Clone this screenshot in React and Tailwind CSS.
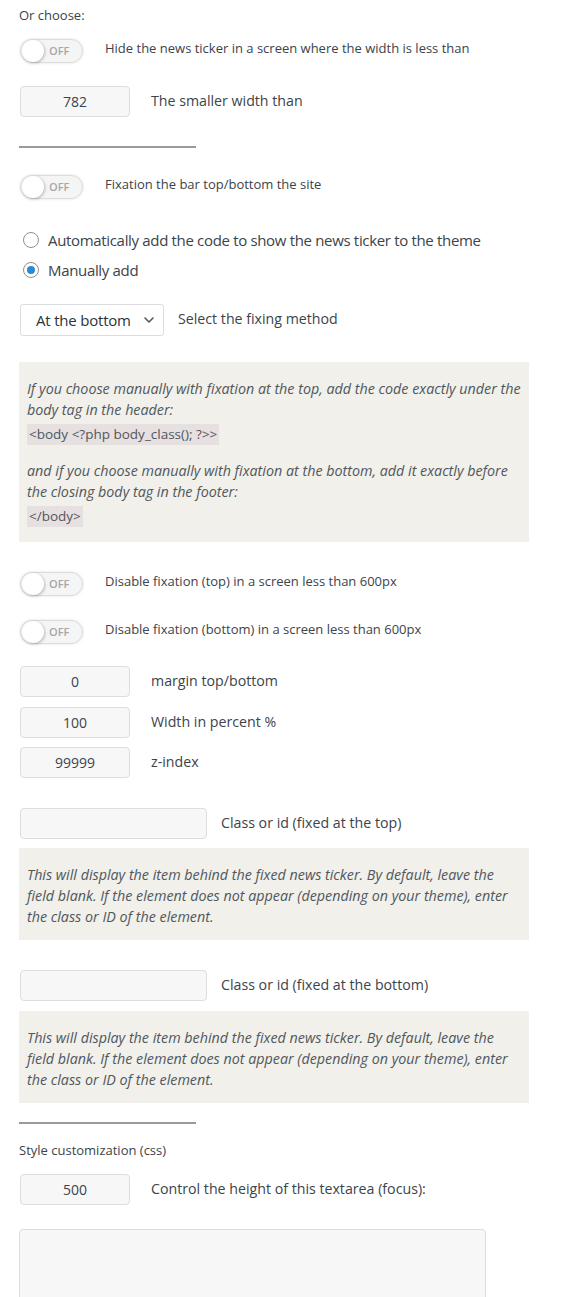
import React from "react";

const Toggle = () => (
  <div className="relative w-[63px] h-[24px] shrink-0 rounded-full border border-[#dcdcdc] bg-[#f5f5f5] shadow-[0_0_3px_rgba(0,0,0,0.12)]">
    <div className="absolute left-[1px] top-[0px] w-[22px] h-[22px] rounded-full bg-white shadow-[1px_1px_3px_rgba(0,0,0,0.25)]" />
    <span className="absolute left-[28px] top-[4px] text-[11px] leading-[14px] font-semibold text-[#a7a7a7]">
      OFF
    </span>
  </div>
);

const ToggleRow = ({ label, className = "" }) => (
  <div className={"flex items-start gap-[22px] " + className}>
    <Toggle />
    <span className="text-[13px] leading-[18px] text-[#3c434a]">{label}</span>
  </div>
);

const NumInput = ({ value, label, className = "", width = "w-[110px]", gap = "gap-[21px]" }) => (
  <div className={"flex items-center " + gap + " " + className}>
    <div
      className={
        width +
        " h-[31px] shrink-0 rounded-[4px] border border-[#dddddd] bg-[#f7f7f7] flex items-center justify-center text-[14px] text-[#3c434a]"
      }
    >
      {value}
    </div>
    <span className="text-[14.2px] leading-[20px] text-[#3c434a] -mt-[1px]">{label}</span>
  </div>
);

const Radio = ({ checked, label, className = "" }) => (
  <div className={"flex items-center gap-[9px] " + className}>
    <div className="w-[16px] h-[16px] rounded-full border border-[#8c8f94] bg-white flex items-center justify-center">
      {checked && <div className="w-[8px] h-[8px] rounded-full bg-[#2a8bd0]" />}
    </div>
    <span className="text-[15px] tracking-[-0.33px] leading-[22px] text-[#3c434a]">{label}</span>
  </div>
);

const Note = ({ children, className = "" }) => (
  <div className={"w-[510px] bg-[#f1f0ea] px-[8px] " + className}>{children}</div>
);

const Code = ({ children, className = "" }) => (
  <code
    className={"block w-fit bg-[#e6e0e0] px-[2px] text-[13.5px] leading-[21px] text-[#50575e] " + className}
    style={{ fontFamily: "inherit" }}
  >
    {children}
  </code>
);

export default function App() {
  return (
    <div
      className="bg-white min-h-[1297px] pl-[19px] pr-[20px]"
      style={{ fontFamily: '"Segoe UI", "Open Sans", "Noto Sans", sans-serif' }}
    >
      <div className="pt-[5px] text-[13px] leading-[20px] text-[#3c434a]">Or choose:</div>

      <div className="pl-[1px]">
        <ToggleRow className="mt-[14px]" label="Hide the news ticker in a screen where the width is less than" />
        <NumInput className="mt-[23px]" value="782" label="The smaller width than" />
      </div>

      <div className="mt-[29px] w-[177px] h-[2px] bg-[#9a9a9a]" />

      <div className="pl-[1px]">
        <ToggleRow className="mt-[27px]" label="Fixation the bar top/bottom the site" />
      </div>

      <div className="pl-[4px] mt-[30px]">
        <Radio label="Automatically add the code to show the news ticker to the theme" />
        <Radio className="mt-[8px]" checked label="Manually add" />
      </div>

      <div className="pl-[1px] mt-[23px] flex items-center gap-[14px]">
        <div className="w-[144px] h-[32px] rounded-[3px] border border-[#dcdcde] bg-white flex items-center justify-between pl-[15px] pr-[8px]">
          <span className="text-[15px] tracking-[-0.2px] text-[#2c3338]">At the bottom</span>
          <svg width="12" height="12" viewBox="0 0 12 12" fill="none">
            <path d="M2 4l4 4 4-4" stroke="#50575e" strokeWidth="1.6" strokeLinecap="round" strokeLinejoin="round" />
          </svg>
        </div>
        <span className="text-[14.2px] leading-[20px] text-[#3c434a] -mt-[3px]">Select the fixing method</span>
      </div>

      <Note className="mt-[26px] pt-[16px] pb-[15px]">
        <p className="italic text-[14.3px] leading-[21px] text-[#50575e]">
          If you choose manually with fixation at the top, add the code exactly under the body tag in the header:
        </p>
        <Code className="mt-[4px]">{"<body <?php body_class(); ?>>"}</Code>
        <p className="mt-[15px] italic text-[14.3px] leading-[21px] text-[#50575e]">
          and if you choose manually with fixation at the bottom, add it exactly before the closing body tag in the footer:
        </p>
        <Code className="mt-[4px]">{"</body>"}</Code>
      </Note>

      <div className="pl-[1px]">
        <ToggleRow className="mt-[30px]" label="Disable fixation (top) in a screen less than 600px" />
        <ToggleRow className="mt-[24px]" label="Disable fixation (bottom) in a screen less than 600px" />

        <NumInput className="mt-[22px]" value="0" label="margin top/bottom" />
        <NumInput className="mt-[10px]" value="100" label="Width in percent %" />
        <NumInput className="mt-[9px]" value="99999" label="z-index" />

        <NumInput className="mt-[30px]" value="" width="w-[187px]" gap="gap-[14px]" label="Class or id (fixed at the top)" />
      </div>

      <Note className="mt-[9px] pt-[16px] pb-[13px]">
        <p className="italic text-[14.3px] leading-[21px] text-[#50575e]">
          This will display the item behind the fixed news ticker. By default, leave the field blank. If the element does not appear (depending on your theme), enter the class or ID of the element.
        </p>
      </Note>

      <div className="pl-[1px]">
        <NumInput className="mt-[30px]" value="" width="w-[187px]" gap="gap-[14px]" label="Class or id (fixed at the bottom)" />
      </div>

      <Note className="mt-[10px] pt-[16px] pb-[13px]">
        <p className="italic text-[14.3px] leading-[21px] text-[#50575e]">
          This will display the item behind the fixed news ticker. By default, leave the field blank. If the element does not appear (depending on your theme), enter the class or ID of the element.
        </p>
      </Note>

      <div className="mt-[19px] w-[177px] h-[2px] bg-[#9a9a9a]" />

      <div className="mt-[16px] text-[13px] leading-[20px] text-[#3c434a]">Style customization (css)</div>

      <div className="pl-[1px]">
        <NumInput className="mt-[14px]" value="500" label="Control the height of this textarea (focus):" />
      </div>

      <div className="mt-[24px] w-[467px] h-[120px] rounded-[4px] border border-[#dddddd] bg-[#f7f7f7]" />
    </div>
  );
}
